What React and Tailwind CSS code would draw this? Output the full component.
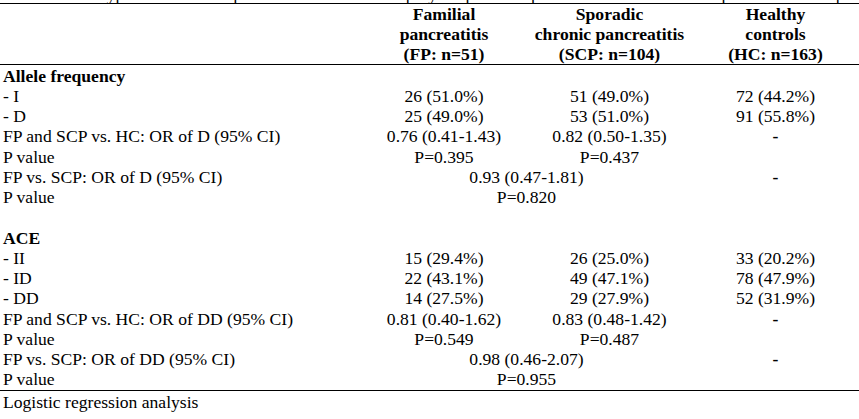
import React from "react";

const rows = [
  { label: "Allele frequency", bold: true },
  { label: "- I", cells: ["26 (51.0%)", "51 (49.0%)", "72 (44.2%)"] },
  { label: "- D", cells: ["25 (49.0%)", "53 (51.0%)", "91 (55.8%)"] },
  { label: "FP and SCP vs. HC: OR of D (95% CI)", cells: ["0.76 (0.41-1.43)", "0.82 (0.50-1.35)", "-"] },
  { label: "P value", cells: ["P=0.395", "P=0.437", ""] },
  { label: "FP vs. SCP: OR of D (95% CI)", merged: "0.93 (0.47-1.81)", last: "-" },
  { label: "P value", merged: "P=0.820", last: "" },
  { label: "" },
  { label: "ACE", bold: true },
  { label: "- II", cells: ["15 (29.4%)", "26 (25.0%)", "33 (20.2%)"] },
  { label: "- ID", cells: ["22 (43.1%)", "49 (47.1%)", "78 (47.9%)"] },
  { label: "- DD", cells: ["14 (27.5%)", "29 (27.9%)", "52 (31.9%)"] },
  { label: "FP and SCP vs. HC: OR of DD (95% CI)", cells: ["0.81 (0.40-1.62)", "0.83 (0.48-1.42)", "-"] },
  { label: "P value", cells: ["P=0.549", "P=0.487", ""] },
  { label: "FP vs. SCP: OR of DD (95% CI)", merged: "0.98 (0.46-2.07)", last: "-" },
  { label: "P value", merged: "P=0.955", last: "" },
];

const Row = ({ row }) => {
  const td = "p-0 text-center align-middle whitespace-nowrap";
  return (
    <tr className="h-[20.27px] leading-[20.27px]">
      <td className={`p-0 pl-[3px] text-left whitespace-nowrap ${row.bold ? "font-bold" : ""}`}>{row.label || "\u00a0"}</td>
      {row.cells &&
        row.cells.map((c, i) => (
          <td key={i} className={`${td} ${c === "-" ? "font-bold" : ""}`}>
            {c}
          </td>
        ))}
      {row.merged !== undefined && (
        <>
          <td colSpan={2} className={td}>
            {row.merged}
          </td>
          <td className={`${td} font-bold`}>{row.last}</td>
        </>
      )}
      {!row.cells && row.merged === undefined && <td colSpan={3} className={td}></td>}
    </tr>
  );
};

export default function App() {
  return (
    <div className="w-[859px] h-[419px] overflow-hidden bg-white text-black text-[17.6px] [font-family:'Liberation_Serif','Times_New_Roman',serif]">
      {/* clipped caption above the table */}
      <div className="h-[3px] overflow-hidden">
        <div className="-mt-[16px] pl-[3px] whitespace-nowrap leading-[20px]">
          Table 3. Genotype and allele frequencies of the ACE I/D polymorphism in patients with familial and sporadic chronic pancreatitis, and healthy controls
        </div>
      </div>
      <table className="w-[859px] table-fixed border-collapse">
        <colgroup>
          <col className="w-[361px]" />
          <col className="w-[166px]" />
          <col className="w-[165px]" />
          <col className="w-[167px]" />
        </colgroup>
        <thead>
          <tr className="border-t-[1.5px] border-b-[1.5px] border-black">
            <th className="p-0 h-[61px]"></th>
            <th className="p-0 font-bold text-center leading-[20px] align-middle">
              Familial
              <br />
              pancreatitis
              <br />
              (FP: n=51)
            </th>
            <th className="p-0 font-bold text-center leading-[20px] align-middle whitespace-nowrap">
              Sporadic
              <br />
              chronic pancreatitis
              <br />
              (SCP: n=104)
            </th>
            <th className="p-0 font-bold text-center leading-[20px] align-middle">
              Healthy
              <br />
              controls
              <br />
              (HC: n=163)
            </th>
          </tr>
        </thead>
        <tbody className="border-b-[1.5px] border-black">
          <tr className="h-[1px]">
            <td colSpan={4} className="p-0"></td>
          </tr>
          {rows.map((r, i) => (
            <Row key={i} row={r} />
          ))}
        </tbody>
      </table>
      <div className="pl-[3px] pt-[1px] leading-[20px]">Logistic regression analysis</div>
    </div>
  );
}
